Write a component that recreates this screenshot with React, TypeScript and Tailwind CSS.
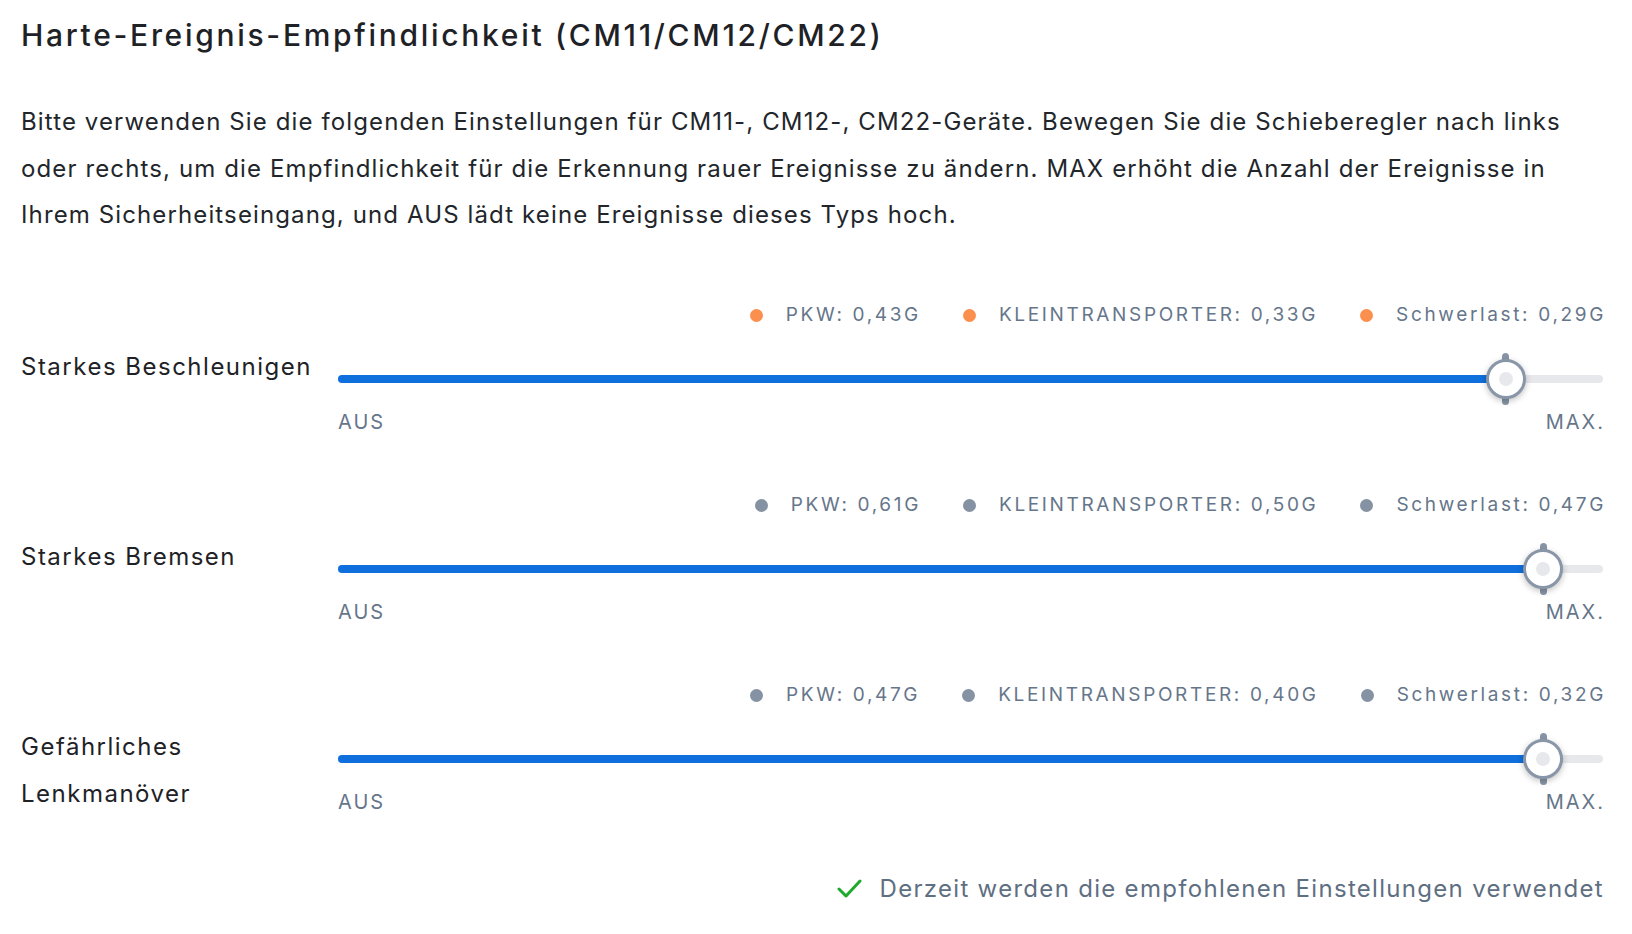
import React from "react";

type Row = {
  label: string;
  dot: string;
  pkw: string;
  van: string;
  heavy: string;
  value: number; // 0..1
};

const rows: Row[] = [
  { label: "Starkes Beschleunigen", dot: "bg-[#fb8f4e]", pkw: "0,43G", van: "0,33G", heavy: "0,29G", value: 0.923 },
  { label: "Starkes Bremsen", dot: "bg-[#8592a3]", pkw: "0,61G", van: "0,50G", heavy: "0,47G", value: 0.9526 },
  { label: "Gefährliches Lenkmanöver", dot: "bg-[#8592a3]", pkw: "0,47G", van: "0,40G", heavy: "0,32G", value: 0.9526 },
];

function Legend({ dot, text }: { dot: string; text: string }) {
  return (
    <div className="flex items-center gap-[23px]">
      <span className={`h-[13px] w-[13px] rounded-full ${dot}`} />
      <span>{text}</span>
    </div>
  );
}

function Slider({ value }: { value: number }) {
  const pct = `${value * 100}%`;
  return (
    <div className="relative h-[52px]">
      <div className="absolute inset-x-0 top-[22px] h-[8px] rounded-full bg-[#e6e8ec]" />
      <div className="absolute left-0 top-[22px] h-[8px] rounded-full bg-[#0e6fdd]" style={{ width: pct }} />
      <div
        className="absolute top-0 flex h-[52px] w-[40px] -translate-x-1/2 items-center justify-center"
        style={{ left: pct }}
      >
        <span className="absolute top-0 h-[10px] w-[7px] rounded-full bg-[#8896a7]" />
        <span className="absolute bottom-0 h-[10px] w-[7px] rounded-full bg-[#8896a7]" />
        <span className="relative flex h-[40px] w-[40px] items-center justify-center rounded-full border-[3px] border-[#8896a7] bg-white shadow-[0_2px_6px_rgba(0,0,0,0.25)]">
          <span className="h-[14px] w-[14px] rounded-full bg-[#e6e8ec]" />
        </span>
      </div>
    </div>
  );
}

export default function App() {
  return (
    <div className="min-h-screen bg-white pl-[21px] pr-[29px] pt-[15px] font-['Inter',sans-serif] text-[#1e2226]">
      <h1 className="text-[30px] leading-[40px] font-medium tracking-[2.7px]">Harte-Ereignis-Empfindlichkeit (CM11/CM12/CM22)</h1>
      <p className="mt-[44px] text-[24px] leading-[46.5px] tracking-[1.12px] text-[#22262b]">
        Bitte verwenden Sie die folgenden Einstellungen für CM11-, CM12-, CM22-Geräte. Bewegen Sie die Schieberegler nach links oder rechts, um die Empfindlichkeit für die Erkennung rauer Ereignisse zu ändern. MAX erhöht die Anzahl der Ereignisse in Ihrem Sicherheitseingang, und AUS lädt keine Ereignisse dieses Typs hoch.
      </p>

      <div className="mt-[63px] flex flex-col gap-[58px]">
        {rows.map((r) => (
          <div key={r.label} className="flex items-start gap-[17px]">
            <div className="w-[300px] shrink-0 pt-[41px] text-[24px] leading-[47px] tracking-[1.5px]">{r.label}</div>
            <div className="flex-1">
              <div className="-mr-[3px] flex h-[28px] items-center justify-end gap-[42px] text-[19px] tracking-[2.65px] text-[#66768a]">
                <Legend dot={r.dot} text={`PKW: ${r.pkw}`} />
                <Legend dot={r.dot} text={`KLEINTRANSPORTER: ${r.van}`} />
                <Legend dot={r.dot} text={`Schwerlast: ${r.heavy}`} />
              </div>
              <div className="mt-[23px]">
                <Slider value={r.value} />
              </div>
              <div className="-mr-[2px] mt-[5px] flex justify-between text-[20px] leading-[24px] tracking-[2px] text-[#66768a]">
                <span>AUS</span>
                <span>MAX.</span>
              </div>
            </div>
          </div>
        ))}
      </div>

      <div className="-mr-[1px] mt-[54px] flex items-center justify-end gap-[18px] text-[24px] leading-[36px] tracking-[1.3px] text-[#5f6f82]">
        <svg width="25" height="19" viewBox="0 0 25 19" fill="none">
          <path d="M2 10 L9 17 L23 2" stroke="#1faa2e" strokeWidth="3" strokeLinecap="round" strokeLinejoin="round" />
        </svg>
        <span>Derzeit werden die empfohlenen Einstellungen verwendet</span>
      </div>
    </div>
  );
}
